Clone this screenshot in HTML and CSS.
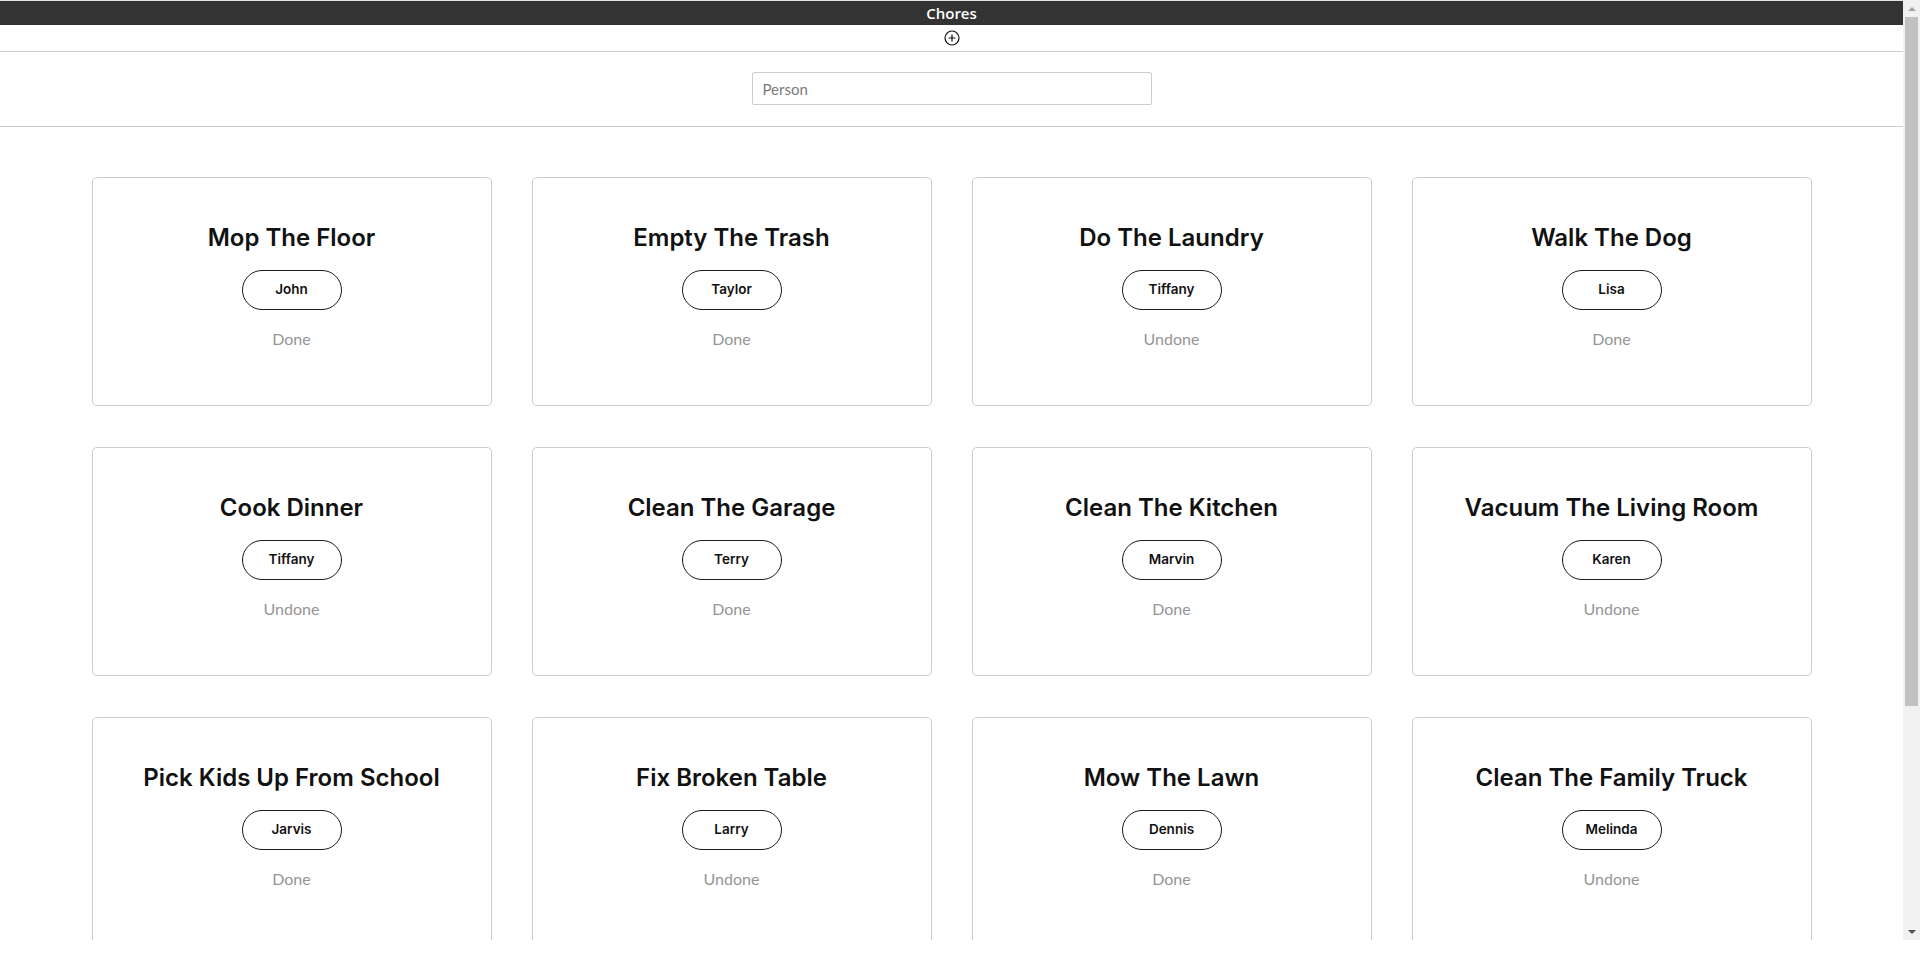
FILE: index.html
```html
<!DOCTYPE html>
<html lang="en">
<head>
<meta charset="utf-8">
<title>Chores</title>
<link rel="stylesheet" href="styles.css">
</head>
<body>
<div class="window">
  <div class="viewport">
    <header class="topbar">Chores</header>
    <div class="addbar">
      <button class="add-btn" aria-label="Add chore">
        <svg width="16" height="16" viewBox="0 0 16 16" aria-hidden="true">
          <circle cx="8" cy="8" r="7" fill="none" stroke="#111" stroke-width="1.2"/>
          <path d="M8 4.6v6.8M4.6 8h6.8" stroke="#111" stroke-width="1.2" fill="none"/>
        </svg>
      </button>
    </div>
    <div class="searchbar">
      <input class="search-input" type="text" placeholder="Person">
    </div>
    <main class="grid">
      <div class="card"><h2 class="card-title">Mop The Floor</h2><span class="pill">John</span><span class="status">Done</span></div>
      <div class="card"><h2 class="card-title">Empty The Trash</h2><span class="pill">Taylor</span><span class="status">Done</span></div>
      <div class="card"><h2 class="card-title">Do The Laundry</h2><span class="pill">Tiffany</span><span class="status">Undone</span></div>
      <div class="card"><h2 class="card-title">Walk The Dog</h2><span class="pill">Lisa</span><span class="status">Done</span></div>
      <div class="card"><h2 class="card-title">Cook Dinner</h2><span class="pill">Tiffany</span><span class="status">Undone</span></div>
      <div class="card"><h2 class="card-title">Clean The Garage</h2><span class="pill">Terry</span><span class="status">Done</span></div>
      <div class="card"><h2 class="card-title">Clean The Kitchen</h2><span class="pill">Marvin</span><span class="status">Done</span></div>
      <div class="card"><h2 class="card-title">Vacuum The Living Room</h2><span class="pill">Karen</span><span class="status">Undone</span></div>
      <div class="card"><h2 class="card-title">Pick Kids Up From School</h2><span class="pill">Jarvis</span><span class="status">Done</span></div>
      <div class="card"><h2 class="card-title">Fix Broken Table</h2><span class="pill">Larry</span><span class="status">Undone</span></div>
      <div class="card"><h2 class="card-title">Mow The Lawn</h2><span class="pill">Dennis</span><span class="status">Done</span></div>
      <div class="card"><h2 class="card-title">Clean The Family Truck</h2><span class="pill">Melinda</span><span class="status">Undone</span></div>
    </main>
  </div>
  <div class="scrollbar" aria-hidden="true">
    <div class="sb-btn"><span class="arrow-up"></span></div>
    <div class="sb-track"><div class="sb-thumb"></div></div>
    <div class="sb-btn"><span class="arrow-down"></span></div>
  </div>
</div>
</body>
</html>
```
FILE: styles.css
```css
html, body {
  margin: 0;
  padding: 0;
  height: 970px;
  overflow: hidden;
  background: #fff;
}

.window {
  height: 940px;
  display: flex;
}

.viewport {
  flex: 1;
  min-width: 0;
  overflow: hidden;
}

/* drawn scrollbar */
.scrollbar {
  width: 17px;
  flex: none;
  background: #f1f1f1;
  display: flex;
  flex-direction: column;
}
.sb-btn {
  height: 17px;
  flex: none;
  display: flex;
  align-items: center;
  justify-content: center;
}
.arrow-up {
  width: 0;
  height: 0;
  border-left: 4px solid transparent;
  border-right: 4px solid transparent;
  border-bottom: 4px solid #a3a3a3;
}
.arrow-down {
  width: 0;
  height: 0;
  border-left: 4px solid transparent;
  border-right: 4px solid transparent;
  border-top: 4px solid #505050;
}
.sb-track {
  flex: 1;
  padding: 0 2px;
}
.sb-thumb {
  height: 689px;
  background: #c1c1c1;
}

.topbar {
  height: 24px;
  border-top: 1px solid #e2e2e2;
  background: #333333;
  color: #ffffff;
  font-family: "Open Sans", "Liberation Sans", sans-serif;
  font-weight: 600;
  font-size: 15px;
  line-height: 24px;
  text-align: center;
}

.addbar {
  height: 26px;
  display: flex;
  align-items: center;
  justify-content: center;
  border-bottom: 1px solid #cccccc;
}

.add-btn {
  border: 0;
  background: none;
  padding: 0;
  width: 16px;
  height: 16px;
  display: flex;
  cursor: pointer;
}

.searchbar {
  display: flex;
  justify-content: center;
  padding: 20px 0 21px;
  border-bottom: 1px solid #cccccc;
}

.search-input {
  width: 400px;
  height: 33px;
  box-sizing: border-box;
  border: 1px solid #cccccc;
  border-radius: 2px;
  padding: 0 10px;
  font-family: Lato, "Liberation Sans", sans-serif;
  font-size: 15px;
  color: #333;
  outline: none;
}
.search-input::placeholder {
  color: #7a7a7a;
}

.grid {
  display: grid;
  grid-template-columns: repeat(4, 400px);
  grid-auto-rows: 229px;
  column-gap: 40px;
  row-gap: 41px;
  justify-content: center;
  padding: 50px 0 289px;
}

.card {
  border: 1px solid #cccccc;
  border-radius: 5px;
  display: flex;
  flex-direction: column;
  align-items: center;
  padding-top: 45px;
  box-sizing: border-box;
}

.card-title {
  margin: 0;
  font-family: Inter, "Noto Sans", sans-serif;
  font-weight: 600;
  font-size: 24px;
  line-height: 30px;
  color: #111;
}

.pill {
  margin-top: 17px;
  width: 100px;
  height: 40px;
  box-sizing: border-box;
  border: 1px solid #1a1a1a;
  border-radius: 20px;
  padding-bottom: 2px;
  display: flex;
  align-items: center;
  justify-content: center;
  font-family: Inter, "Noto Sans", sans-serif;
  font-weight: 600;
  font-size: 13.5px;
  color: #111;
}

.status {
  margin-top: 19px;
  font-family: Lato, "Liberation Sans", sans-serif;
  font-size: 16px;
  line-height: 20px;
  color: #959595;
}
```
